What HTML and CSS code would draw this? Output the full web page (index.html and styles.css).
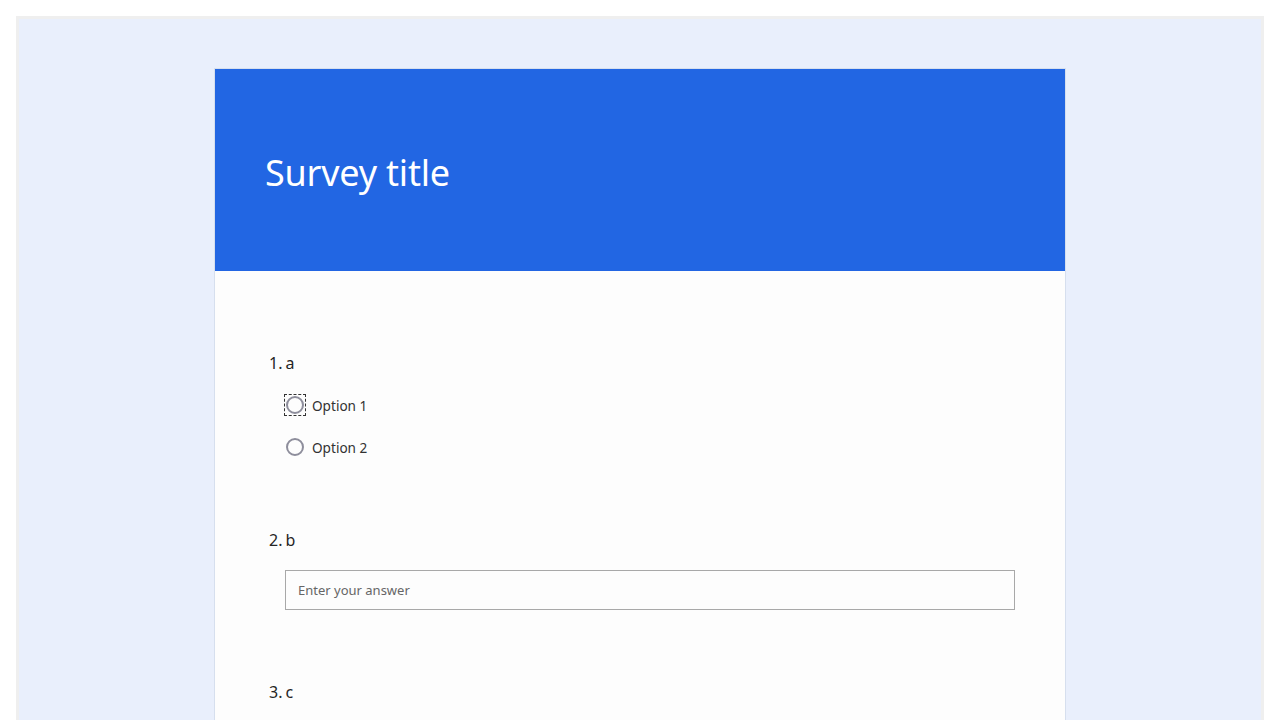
FILE: index.html
```html
<!DOCTYPE html>
<html>
<head>
<meta charset="utf-8">
<link rel="stylesheet" href="styles.css">
</head>
<body>
<div class="frame">
  <div class="card">
    <div class="header"><h1 class="title">Survey title</h1></div>
    <div class="body">
      <div class="question q1">
        <div class="qtitle"><span class="num">1.</span> a</div>
        <div class="options">
          <label class="option"><span class="radio-wrap focused"><span class="radio"></span></span><span class="otext">Option 1</span></label>
          <label class="option"><span class="radio-wrap"><span class="radio"></span></span><span class="otext">Option 2</span></label>
        </div>
      </div>
      <div class="question q2">
        <div class="qtitle"><span class="num">2.</span> b</div>
        <div class="answer">Enter your answer</div>
      </div>
      <div class="question q3">
        <div class="qtitle"><span class="num">3.</span> c</div>
      </div>
    </div>
  </div>
</div>
</body>
</html>
```
FILE: styles.css
```css
html, body { margin: 0; padding: 0; background: #ffffff; }
body { padding: 16px; font-family: "Open Sans", "Noto Sans", sans-serif; height: 720px; box-sizing: border-box; overflow: hidden; }
.frame {
  border: 3px solid #efefef;
  background: #e9effc;
  height: 800px;
  padding-top: 49px;
  box-sizing: border-box;
}
.card {
  width: 850px;
  margin: 0 auto;
  border: 1px solid #d6dfee;
  background: #fdfdfd;
}
.header {
  background: #2266e3;
  height: 202px;
  padding: 0 50px;
  display: flex;
  align-items: center;
}
.title {
  margin: 0;
  color: #ffffff;
  font-family: "Noto Sans", "Open Sans", sans-serif;
  font-weight: 400;
  font-size: 36px;
  letter-spacing: -0.2px;
  position: relative;
  top: 2px;
}
.body { padding: 80px 50px 0 54px; min-height: 600px; }
.question { color: #252525; }
.qtitle { font-size: 16px; line-height: 24px; font-family: "Noto Sans", sans-serif; }
.num { margin-right: -1px; }
.options { margin-top: 19px; padding-left: 15px; display: flex; flex-direction: column; gap: 20px; }
.option { display: flex; align-items: center; height: 22px; }
.radio-wrap { width: 20px; height: 20px; display: flex; align-items: center; justify-content: center; border: 1px solid transparent; }
.radio-wrap.focused { border: 1px dashed #333; }
.radio { width: 14px; height: 14px; border-radius: 50%; border: 2px solid #8e8e9c; }
.otext { margin-left: 6px; font-size: 13.6px; color: #323232; font-family: "Noto Sans", sans-serif; }
.q2 { margin-top: 70px; }
.answer {
  margin: 18px 0 0 16px;
  height: 38px;
  border: 1px solid #a8a8a8;
  padding-left: 12px;
  font-size: 13px;
  color: #666;
  display: flex;
  align-items: center;
  font-family: "Noto Sans", sans-serif;
}
.q3 { margin-top: 70px; }
```
